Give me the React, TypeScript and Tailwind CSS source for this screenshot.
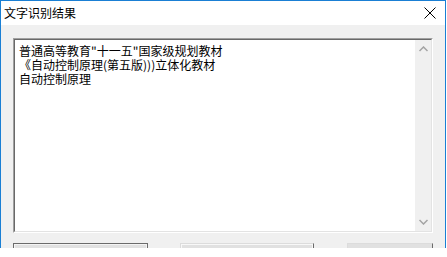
import React from 'react';

const font = { fontFamily: '"Noto Sans CJK SC", "Microsoft YaHei", sans-serif' };

const lines = [
  '普通高等教育"十一五"国家级规划教材',
  '《自动控制原理(第五版)))立体化教材',
  '自动控制原理',
];

const App: React.FC = () => {
  return (
    <div className="w-[447px] h-[257px] bg-white overflow-hidden" style={font}>
      {/* window */}
      <div className="w-[446px] h-[248px] border-t border-l border-r border-[#1a7fd4] bg-[#f0f0f0] flex flex-col overflow-hidden">
        {/* title bar */}
        <div className="h-[24px] bg-white flex items-center justify-between shrink-0">
          <span className="pl-[3px] text-[12px] leading-none text-black">文字识别结果</span>
          <svg width="12" height="12" viewBox="0 0 12 12" className="mr-[9px]">
            <path d="M0.5 0.5 L11.5 11.5 M11.5 0.5 L0.5 11.5" stroke="#000" strokeWidth="1" />
          </svg>
        </div>

        {/* body */}
        <div className="flex-1 pt-[13px] pl-[12px] pr-[12px] flex flex-col">
          {/* text box */}
          <div className="w-[420px] h-[195px] border-t border-l border-[#a0a0a0] border-b border-r border-b-white border-r-white shrink-0">
            <div className="w-full h-full border-t border-l border-[#696969] border-b border-r border-b-[#e3e3e3] border-r-[#e3e3e3] bg-white flex">
              <div className="flex-1 pl-[4px] pt-[4px] text-[12px] leading-[14px] text-black">
                {lines.map((l) => (
                  <div key={l} className="whitespace-nowrap">{l}</div>
                ))}
              </div>
              {/* scrollbar */}
              <div className="w-[16px] bg-[#f0f0f0] flex flex-col justify-between items-center py-[6px]">
                <svg width="9" height="6" viewBox="0 0 9 6">
                  <path d="M0.5 5 L4.5 1 L8.5 5" stroke="#a3a3a3" strokeWidth="1.5" fill="none" />
                </svg>
                <svg width="9" height="6" viewBox="0 0 9 6">
                  <path d="M0.5 1 L4.5 5 L8.5 1" stroke="#a3a3a3" strokeWidth="1.5" fill="none" />
                </svg>
              </div>
            </div>
          </div>

          {/* buttons */}
          <div className="flex mt-[10px]">
            <div className="w-[135px] h-[23px] border border-[#6b6b6b] bg-[#e1e1e1] shrink-0">
              <div className="w-full h-full border border-[#f4f4f4]" />
            </div>
            <div className="ml-[32px] w-[134px] h-[23px] border border-[#dcdcdc] border-r-[#6b6b6b] bg-[#e1e1e1] shrink-0">
              <div className="w-full h-full border border-[#f8f8f8]" />
            </div>
            <div className="ml-[33px] w-[86px] h-[23px] border border-[#dcdcdc] border-r-[#6b6b6b] bg-[#e1e1e1] shrink-0 flex justify-center pt-[4px]">
              <span className="text-[12px] leading-none text-[#3cb371]">保存结果</span>
            </div>
          </div>
        </div>
      </div>
    </div>
  );
};

export default App;
